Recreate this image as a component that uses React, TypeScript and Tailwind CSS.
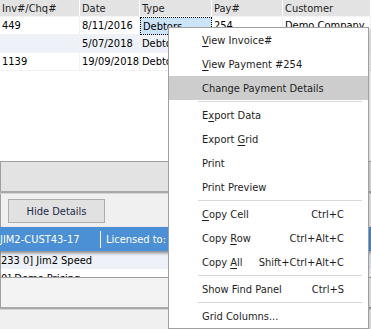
import React from 'react';

const font = "font-['DejaVu_Sans_Condensed','Liberation_Sans',sans-serif]";

type Row = { inv: string; date: string; type: string; pay: string; cust: string; alt?: boolean; focus?: boolean };

const rows: Row[] = [
  { inv: '449', date: '8/11/2016', type: 'Debtors', pay: '254', cust: 'Demo Company', focus: true },
  { inv: '', date: '5/07/2018', type: 'Debtors', pay: '', cust: '', alt: true },
  { inv: '1139', date: '19/09/2018', type: 'Debtors', pay: '', cust: '' },
];

const cols = ['w-[80px]', 'w-[60px]', 'w-[72px]', 'w-[71px]', 'flex-1'];

type Item =
  | { sep: true }
  | { sep?: false; label: React.ReactNode; shortcut?: string; active?: boolean };

const menu: Item[] = [
  { label: <><u>V</u>iew Invoice#</> },
  { label: <><u>V</u>iew Payment #254</> },
  { label: 'Change Payment Details', active: true },
  { sep: true },
  { label: <>E<u>x</u>port Data</> },
  { label: <>Export <u>G</u>rid</> },
  { label: 'Print' },
  { label: 'Print Preview' },
  { sep: true },
  { label: <><u>C</u>opy Cell</>, shortcut: 'Ctrl+C' },
  { label: <>Copy <u>R</u>ow</>, shortcut: 'Ctrl+Alt+C' },
  { label: <>Copy <u>A</u>ll</>, shortcut: 'Shift+Ctrl+Alt+C' },
  { sep: true },
  { label: 'Show Find Panel', shortcut: 'Ctrl+S' },
  { sep: true },
  { label: 'Grid Columns...' },
];

const ContextMenu = () => (
  <div className="absolute z-20 left-[168px] top-[27px] w-[201px] border border-[#a0a0a0] bg-white shadow-[2px_2px_2px_rgba(0,0,0,0.15)]">
    {menu.map((it, i) =>
      it.sep ? (
        <div key={i} className="h-[3px] flex items-center pl-[29px] pr-[6px]">
          <div className="h-px w-full bg-[#d7d7d7]" />
        </div>
      ) : (
        <div
          key={i}
          className={`h-[24px] flex items-center justify-between pl-[33px] pr-[24px] text-[#1e1e1e] ${
            it.active ? 'bg-[#cdcdcd]' : ''
          }`}
        >
          <span className="[&_u]:underline-offset-2">{it.label}</span>
          {it.shortcut && <span>{it.shortcut}</span>}
        </div>
      )
    )}
  </div>
);

export default function App() {
  return (
    <div className={`relative w-[371px] h-[329px] overflow-hidden bg-[#f0f0f0] text-[11px] leading-none ${font}`}>
      {/* grid */}
      <div className="bg-white h-[161px] flex flex-col">
        <div className="h-[17px] flex bg-[#e3e3e3] text-[#1f1f1f] border-b border-[#f4f4f4]">
          {['Inv#/Chq#', 'Date', 'Type', 'Pay#', 'Customer'].map((h, i) => (
            <div key={h} className={`${cols[i]} flex items-center px-[2px] border-r border-white`}>
              {h}
            </div>
          ))}
        </div>
        {rows.map((r, ri) => (
          <div key={ri} className={`h-[18px] flex text-black ${r.alt ? 'bg-[#eef2f8]' : 'bg-white'}`}>
            {[r.inv, r.date, r.type, r.pay, r.cust].map((v, i) => (
              <div
                key={i}
                className={`${cols[i]} flex items-center px-[2px] overflow-hidden whitespace-nowrap ${
                  r.focus && i === 2
                    ? 'bg-[#cce4f7] border border-dotted border-black'
                    : 'border-r border-b border-[#f2f2f2]'
                }`}
              >
                {v}
              </div>
            ))}
          </div>
        ))}
      </div>

      {/* group footer band */}
      <div className="border-t border-[#a0a0a0] border-l h-[30px] bg-[#e3e3e3]" />
      <div className="h-[2px] bg-[#a9a9a9]" />
      <div className="h-px bg-[#d4d4d4]" />

      {/* details button panel */}
      <div className="h-[33px] border-l border-[#a0a0a0] pl-[7px] pt-[5px]">
        <button className="w-[97px] h-[24px] border border-[#adadad] bg-[#e1e1e1] text-[#1b2a44] flex items-center justify-center">
          Hide Details
        </button>
      </div>

      {/* license bar */}
      <div className="relative z-10 h-[24px] bg-[#4b8fd5] text-white flex items-center shadow-[0_2px_3px_rgba(0,0,0,0.45)]">
        <span className="w-[100px]">JIM2-CUST43-17</span>
        <div className="w-px h-[17px] bg-white" />
        <span className="ml-[5px]">Licensed to:</span>
      </div>

      <div className="h-[26px] overflow-hidden border-l border-[#a0a0a0]">
        <div className="h-[18px] flex items-center bg-[#eef2f8] text-black whitespace-nowrap">233 0] Jim2 Speed</div>
        <div className="h-[18px] flex items-center bg-white text-black whitespace-nowrap">0] Demo Pricing</div>
      </div>
      <div className="h-px bg-[#a0a0a0]" />
      <div className="h-[29px] bg-[#f3f3f3] border-l border-[#a0a0a0]" />
      <div className="h-[2px] bg-[#a9a9a9]" />
      <div className="h-px bg-[#d4d4d4]" />

      <ContextMenu />
    </div>
  );
}
